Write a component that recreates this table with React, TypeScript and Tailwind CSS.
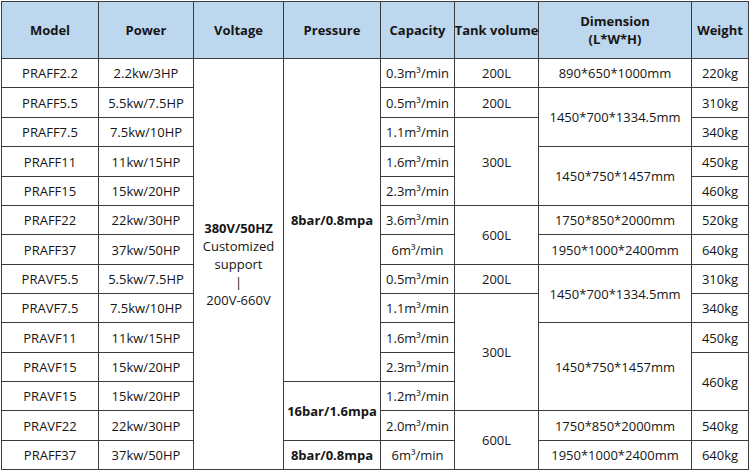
import React from "react";

type C = { t: React.ReactNode; s?: string; b?: boolean };

const Cell = ({ t, s = "", b = false }: C) => (
  <div
    className={`bg-white flex items-center justify-center text-center leading-[18px] whitespace-nowrap ${b ? "font-bold" : ""} ${s}`}
  >
    {t}
  </div>
);

const H = ({ t }: { t: React.ReactNode }) => (
  <div className="bg-[#bdd7ee] flex items-center justify-center text-center font-bold leading-[18px] whitespace-nowrap">
    {t}
  </div>
);

export default function App() {
  const m3 = (v: string) => <span>{v}m³/min</span>;
  return (
    <div className="w-[750px] h-[472px] bg-white pl-px pt-px">
      <div
        className="grid w-[748px] bg-[#3c3c3c] gap-px p-px text-[13px] text-[#161616] grid-cols-[96px_94px_89px_96px_73px_83px_152px_56px] grid-rows-[56px_28px_29px_28px_29px_28px_28px_29px_28px_28px_29px_28px_28px_29px_28px]"
        style={{ fontFamily: '"Open Sans", "Noto Sans", sans-serif' }}
      >
        <H t="Model" />
        <H t="Power" />
        <H t="Voltage" />
        <H t="Pressure" />
        <H t="Capacity" />
        <H t="Tank volume" />
        <H t={<span>Dimension<br />(L*W*H)</span>} />
        <H t="Weight" />

        {/* row 1 */}
        <Cell t="PRAFF2.2" />
        <Cell t="2.2kw/3HP" />
        <Cell
          s="row-span-14"
          t={
            <span>
              <b>380V/50HZ</b>
              <br />
              Customized
              <br />
              support
              <br />|<br />
              200V-660V
            </span>
          }
        />
        <Cell s="row-span-11" b t="8bar/0.8mpa" />
        <Cell t={m3("0.3")} />
        <Cell t="200L" />
        <Cell t="890*650*1000mm" />
        <Cell t="220kg" />

        {/* row 2 */}
        <Cell t="PRAFF5.5" />
        <Cell t="5.5kw/7.5HP" />
        <Cell t={m3("0.5")} />
        <Cell t="200L" />
        <Cell s="row-span-2" t="1450*700*1334.5mm" />
        <Cell t="310kg" />

        {/* row 3 */}
        <Cell t="PRAFF7.5" />
        <Cell t="7.5kw/10HP" />
        <Cell t={m3("1.1")} />
        <Cell s="row-span-3" t="300L" />
        <Cell t="340kg" />

        {/* row 4 */}
        <Cell t="PRAFF11" />
        <Cell t="11kw/15HP" />
        <Cell t={m3("1.6")} />
        <Cell s="row-span-2" t="1450*750*1457mm" />
        <Cell t="450kg" />

        {/* row 5 */}
        <Cell t="PRAFF15" />
        <Cell t="15kw/20HP" />
        <Cell t={m3("2.3")} />
        <Cell t="460kg" />

        {/* row 6 */}
        <Cell t="PRAFF22" />
        <Cell t="22kw/30HP" />
        <Cell t={m3("3.6")} />
        <Cell s="row-span-2" t="600L" />
        <Cell t="1750*850*2000mm" />
        <Cell t="520kg" />

        {/* row 7 */}
        <Cell t="PRAFF37" />
        <Cell t="37kw/50HP" />
        <Cell t={m3("6")} />
        <Cell t="1950*1000*2400mm" />
        <Cell t="640kg" />

        {/* row 8 */}
        <Cell t="PRAVF5.5" />
        <Cell t="5.5kw/7.5HP" />
        <Cell t={m3("0.5")} />
        <Cell t="200L" />
        <Cell s="row-span-2" t="1450*700*1334.5mm" />
        <Cell t="310kg" />

        {/* row 9 */}
        <Cell t="PRAVF7.5" />
        <Cell t="7.5kw/10HP" />
        <Cell t={m3("1.1")} />
        <Cell s="row-span-4" t="300L" />
        <Cell t="340kg" />

        {/* row 10 */}
        <Cell t="PRAVF11" />
        <Cell t="11kw/15HP" />
        <Cell t={m3("1.6")} />
        <Cell s="row-span-3" t="1450*750*1457mm" />
        <Cell t="450kg" />

        {/* row 11 */}
        <Cell t="PRAVF15" />
        <Cell t="15kw/20HP" />
        <Cell t={m3("2.3")} />
        <Cell s="row-span-2" t="460kg" />

        {/* row 12 */}
        <Cell t="PRAVF15" />
        <Cell t="15kw/20HP" />
        <Cell s="row-span-2" b t="16bar/1.6mpa" />
        <Cell t={m3("1.2")} />

        {/* row 13 */}
        <Cell t="PRAVF22" />
        <Cell t="22kw/30HP" />
        <Cell t={m3("2.0")} />
        <Cell s="row-span-2" t="600L" />
        <Cell t="1750*850*2000mm" />
        <Cell t="540kg" />

        {/* row 14 */}
        <Cell t="PRAFF37" />
        <Cell t="37kw/50HP" />
        <Cell b t="8bar/0.8mpa" />
        <Cell t={m3("6")} />
        <Cell t="1950*1000*2400mm" />
        <Cell t="640kg" />
      </div>
    </div>
  );
}
